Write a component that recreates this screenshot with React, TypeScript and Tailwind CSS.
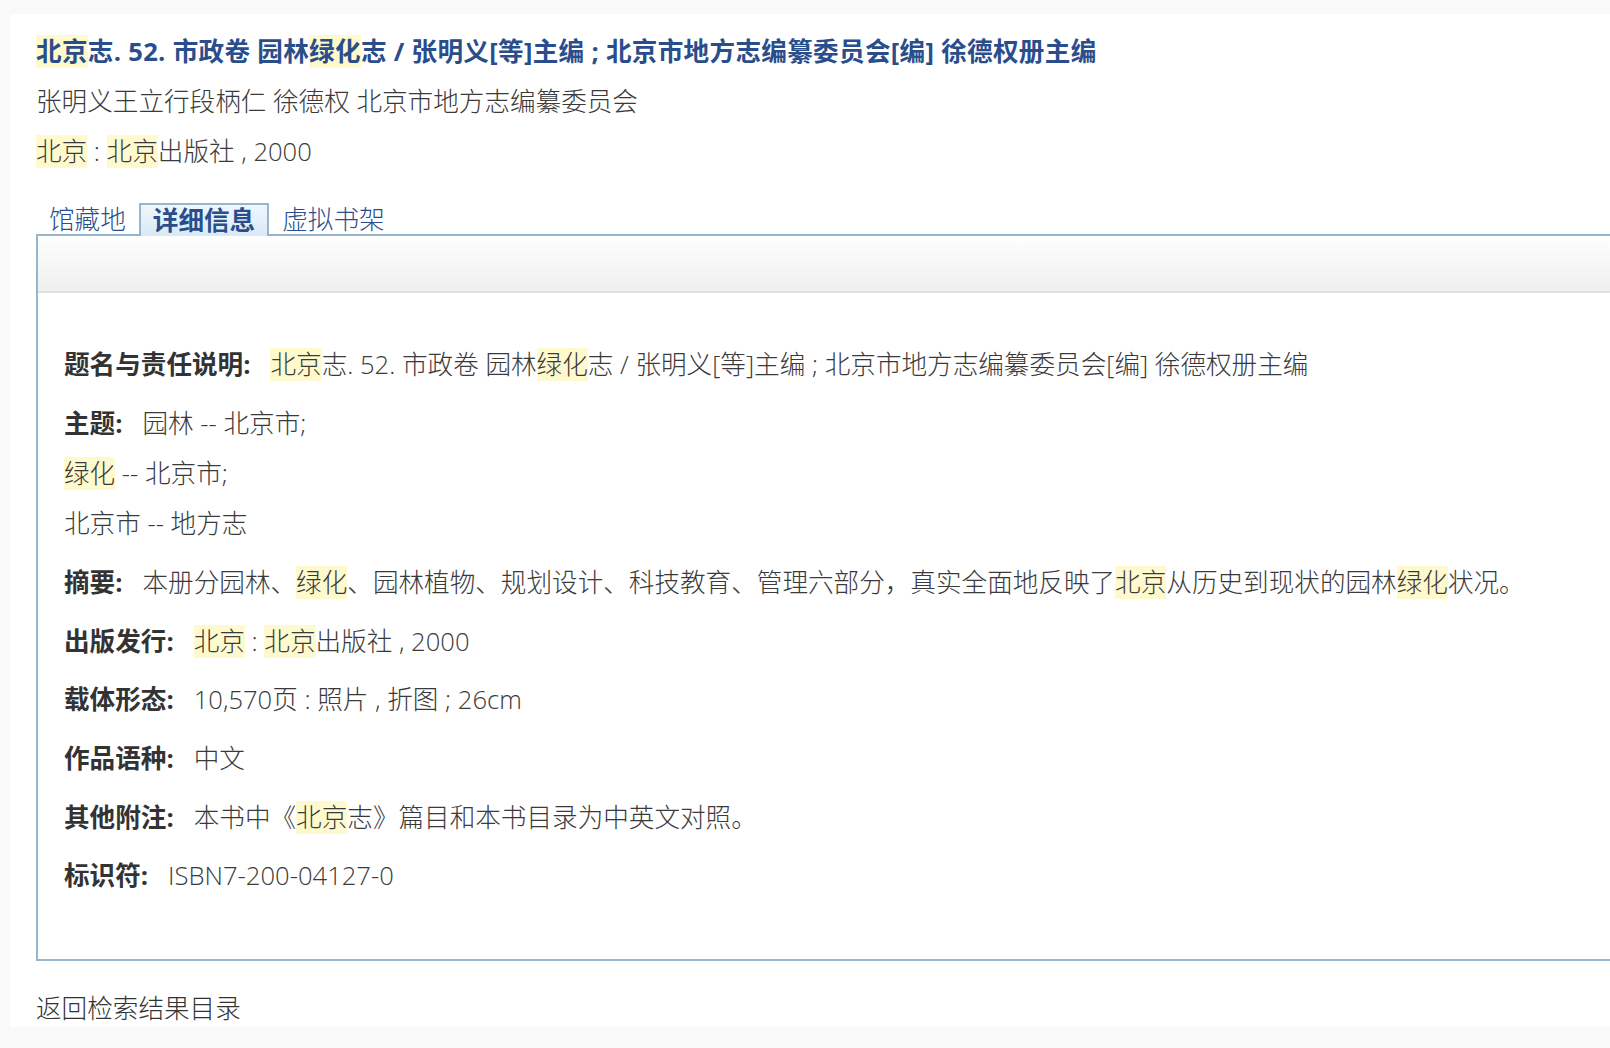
import React from "react";

const FONT = '"Open Sans", "Noto Sans CJK SC", sans-serif';

function H({ children }: { children: React.ReactNode }) {
  return <span className="inline-block bg-[#fffacd] leading-[33px] h-[33px] align-baseline">{children}</span>;
}

function Label({ children }: { children: React.ReactNode }) {
  return <span className="font-bold text-[#333333] mr-[20px]">{children}</span>;
}

export default function App() {
  return (
    <div className="min-h-screen bg-[#f9f9f9] pt-[14px] pl-[10px]" style={{ fontFamily: FONT }}>
      <div className="bg-white overflow-hidden pl-[26px] pt-[13px] text-[25.6px] text-[#3a3a3a]">
        {/* Title block */}
        <div className="leading-[50px] whitespace-nowrap">
          <div className="font-bold text-[#2a4e8c] tracking-[0.3px]">
            <H>北京</H>志. 52. 市政卷 园林<H>绿化</H>志 / 张明义[等]主编 ; 北京市地方志编纂委员会[编] 徐德权册主编
          </div>
          <div className="font-light">张明义王立行段柄仁 徐德权 北京市地方志编纂委员会</div>
          <div className="font-light">
            <H>北京</H> : <H>北京</H>出版社 , 2000
          </div>
        </div>

        {/* Tabs */}
        <div className="mt-[26px] flex h-[31px] items-end relative z-10 text-[#2a4e8c]">
          <div className="h-[31px] leading-[29px] px-[11px] border-2 border-transparent border-b-0 font-light">馆藏地</div>
          <div className="h-[33px] mb-[-2px] leading-[31px] px-[12px] border-2 border-b-0 border-[#95b6cd] bg-gradient-to-b from-[#f0f7fd] to-[#d8e9f7] font-bold">
            详细信息
          </div>
          <div className="h-[31px] leading-[29px] px-[11px] border-2 border-transparent border-b-0 font-light">虚拟书架</div>
        </div>

        {/* Box */}
        <div className="w-[1620px] border-2 border-[#95b6cd]">
          <div className="h-[57px] bg-gradient-to-b from-[#fefefe] to-[#efefef] border-b-2 border-[#e0e0e0]" />
          <div className="pt-[47px] pl-[26px] pb-[57px] flex flex-col gap-[8.4px] leading-[50.3px] whitespace-nowrap">
            <div>
              <Label>题名与责任说明:</Label>
              <span className="font-light">
                <H>北京</H>志. 52. 市政卷 园林<H>绿化</H>志 / 张明义[等]主编 ; 北京市地方志编纂委员会[编] 徐德权册主编
              </span>
            </div>
            <div className="font-light">
              <div>
                <Label>主题:</Label>园林 -- 北京市;
              </div>
              <div>
                <H>绿化</H> -- 北京市;
              </div>
              <div>北京市 -- 地方志</div>
            </div>
            <div className="font-light">
              <Label>摘要:</Label>本册分园林、<H>绿化</H>、园林植物、规划设计、科技教育、管理六部分，真实全面地反映了<H>北京</H>从历史到现状的园林<H>绿化</H>状况。
            </div>
            <div className="font-light">
              <Label>出版发行:</Label>
              <H>北京</H> : <H>北京</H>出版社 , 2000
            </div>
            <div className="font-light">
              <Label>载体形态:</Label>10,570页 : 照片 , 折图 ; 26cm
            </div>
            <div className="font-light">
              <Label>作品语种:</Label>中文
            </div>
            <div className="font-light">
              <Label>其他附注:</Label>本书中《<H>北京</H>志》篇目和本书目录为中英文对照。
            </div>
            <div className="font-light">
              <Label>标识符:</Label>ISBN7-200-04127-0
            </div>
          </div>
        </div>

        <div className="mt-[30px] leading-[36px] font-light text-[#333333]">返回检索结果目录</div>
      </div>
    </div>
  );
}
